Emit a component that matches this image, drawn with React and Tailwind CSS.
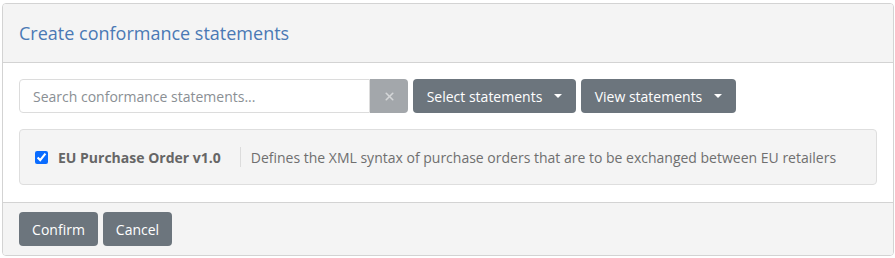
import { X } from 'lucide-react'

function Caret() {
  return <span className="ml-3 inline-block h-0 w-0 border-x-[4px] border-t-[4px] border-x-transparent border-t-white align-middle" />
}

export default function App() {
  return (
    <div className="h-[258px] w-[895px] bg-white pt-[3px] pl-[2px] font-['Open_Sans',sans-serif] text-[14px]">
      <div className="w-[892px] overflow-hidden rounded-[4px] border border-[#d3d3d3]">
        {/* header */}
        <div className="flex h-[59px] items-center border-b border-[#d3d3d3] bg-[#f4f4f4] px-[16px]">
          <h2 className="text-[18px] text-[#4a79b5]">Create conformance statements</h2>
        </div>

        {/* body */}
        <div className="bg-white px-[16px] pt-[16px] pb-[17px]">
          <div className="flex items-center gap-[5px]">
            <div className="flex h-[34px]">
              <input
                placeholder="Search conformance statements..."
                className="h-[34px] w-[351px] rounded-l-[4px] border border-[#dcdcdc] px-[13px] text-[14px] text-[#555] outline-none placeholder:text-[#8a8f94]"
              />
              <button className="flex h-[34px] w-[38px] items-center justify-center rounded-r-[4px] bg-[#a3a7ab] text-[#d4d6d8]">
                <X className="h-[13px] w-[13px]" strokeWidth={3} />
              </button>
            </div>
            <button className="flex h-[34px] w-[163px] items-center justify-center rounded-[4px] bg-[#6c757d] text-white">
              Select statements
              <Caret />
            </button>
            <button className="flex h-[34px] w-[155px] items-center justify-center rounded-[4px] bg-[#6c757d] text-white">
              View statements
              <Caret />
            </button>
          </div>

          <div className="mt-[16px] flex h-[56px] items-center rounded-[4px] border border-[#dedede] bg-[#f4f4f4] px-[15px]">
            <input type="checkbox" defaultChecked className="h-[13px] w-[13px] accent-[#0a6cff]" />
            <span className="ml-[10px] font-bold text-[#666]">EU Purchase Order v1.0</span>
            <span className="mx-[10px] ml-[19px] h-[20px] w-px bg-[#dcdcdc]" />
            <span className="text-[#6f6f6f]">Defines the XML syntax of purchase orders that are to be exchanged between EU retailers</span>
          </div>
        </div>

        {/* footer */}
        <div className="flex gap-[5px] border-t border-[#d3d3d3] bg-[#f4f4f4] px-[16px] py-[9px]">
          <button className="h-[34px] w-[79px] rounded-[4px] bg-[#6c757d] text-white">Confirm</button>
          <button className="h-[34px] w-[69px] rounded-[4px] bg-[#6c757d] text-white">Cancel</button>
        </div>
      </div>
    </div>
  )
}
